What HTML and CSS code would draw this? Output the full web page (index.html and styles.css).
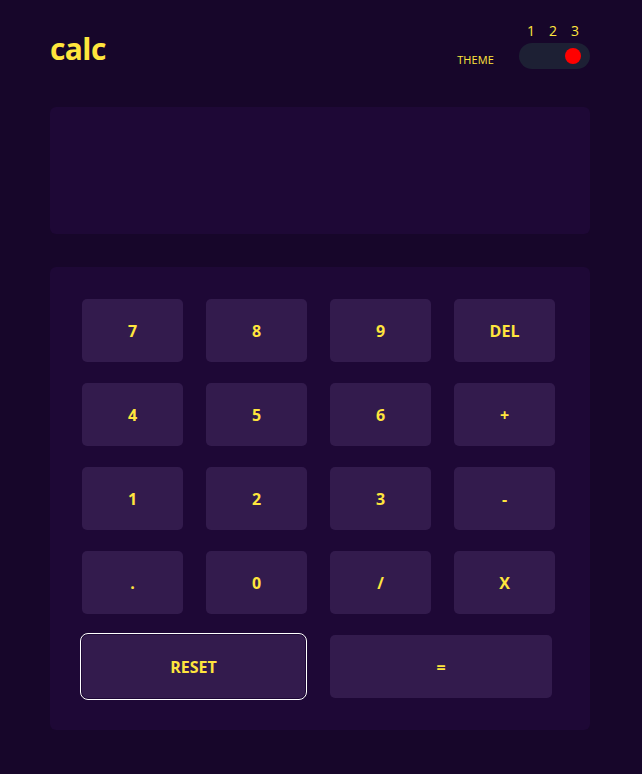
FILE: index.html
```html
<!DOCTYPE html>
<html>
<head>
<meta charset="utf-8">
<link rel="stylesheet" href="styles.css">
</head>
<body>
<main class="calc">
  <header class="top">
    <h1 class="logo">calc</h1>
    <div class="theme">
      <span class="theme-label">THEME</span>
      <div class="theme-switch">
        <div class="theme-nums"><span>1</span><span>2</span><span>3</span></div>
        <div class="toggle"><span class="dot"></span></div>
      </div>
    </div>
  </header>
  <section class="screen"></section>
  <section class="keypad">
    <button class="key">7</button>
    <button class="key">8</button>
    <button class="key">9</button>
    <button class="key">DEL</button>
    <button class="key">4</button>
    <button class="key">5</button>
    <button class="key">6</button>
    <button class="key">+</button>
    <button class="key">1</button>
    <button class="key">2</button>
    <button class="key">3</button>
    <button class="key">-</button>
    <button class="key">.</button>
    <button class="key">0</button>
    <button class="key">/</button>
    <button class="key">X</button>
    <button class="key wide reset">RESET</button>
    <button class="key wide equals">=</button>
  </section>
</main>
</body>
</html>
```
FILE: styles.css
```css
* { box-sizing: border-box; }
html, body { margin: 0; padding: 0; }
body {
  background: #17062a;
  font-family: "Open Sans", "Noto Sans", sans-serif;
  color: #ffe53d;
  width: 642px;
  height: 774px;
}
.calc {
  padding: 0 52px 0 50px;
}
.top {
  display: flex;
  justify-content: space-between;
  align-items: flex-start;
  height: 107px;
  padding-top: 22px;
}
.logo {
  margin: 8px 0 0 0;
  font-size: 30px;
  font-weight: 700;
  line-height: 38px;
  letter-spacing: -0.6px;
}
.theme {
  display: flex;
  align-items: flex-end;
  gap: 25px;
}
.theme-label {
  font-size: 11px;
  line-height: 14px;
  margin-bottom: 2px;
  letter-spacing: 0.1px;
}
.theme-switch {
  display: flex;
  flex-direction: column;
  align-items: flex-end;
}
.theme-nums {
  display: flex;
  gap: 14px;
  font-size: 14px;
  line-height: 18px;
  padding-right: 11px;
  margin-bottom: 3px;
}
.toggle {
  width: 71px;
  height: 26px;
  border-radius: 13px;
  background: #1d2034;
  display: flex;
  align-items: center;
  justify-content: flex-end;
  padding-right: 9px;
}
.dot {
  width: 16px;
  height: 16px;
  border-radius: 50%;
  background: #ff0000;
}
.screen {
  height: 127px;
  background: #1e0836;
  border-radius: 6px;
}
.keypad {
  margin-top: 33px;
  background: #1e0836;
  border-radius: 6px;
  padding: 32px 35px 32px 32px;
  display: grid;
  grid-template-columns: repeat(4, 101px);
  column-gap: 23px;
  row-gap: 21px;
}
.key {
  height: 63px;
  border: 0;
  border-radius: 5px;
  background: #331b4d;
  color: #ffe53d;
  font-family: "Open Sans", "Noto Sans", sans-serif;
  font-size: 16px;
  font-weight: 700;
  padding: 0;
}
.wide { grid-column: span 2; }
.reset {
  outline: 1px solid #fff;
  outline-offset: 1px;
  border-radius: 6px;
  width: 223px;
}
.equals { width: 222px; }
```
